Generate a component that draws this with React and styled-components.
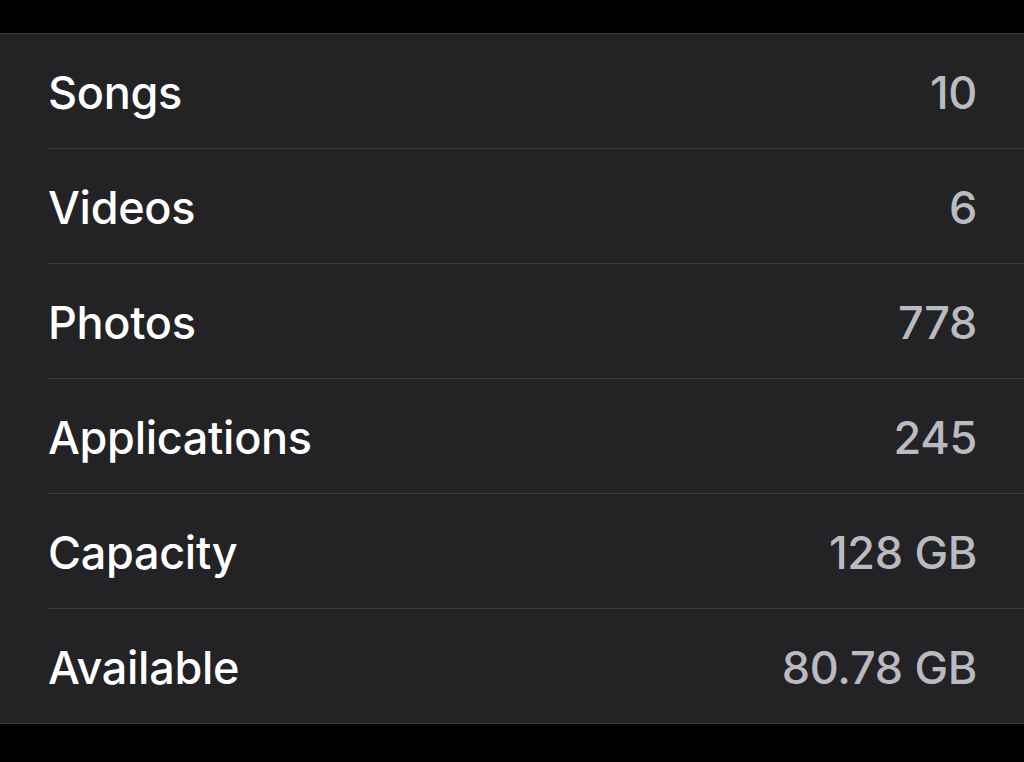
import React from 'react'
import styled, { createGlobalStyle } from 'styled-components'

const rows = [
    { label: 'Songs', value: '10' },
    { label: 'Videos', value: '6' },
    { label: 'Photos', value: '778' },
    { label: 'Applications', value: '245' },
    { label: 'Capacity', value: '128 GB' },
    { label: 'Available', value: '80.78 GB' },
]

const App = () => {
    return <>
        <GlobalStyle />
        <Screen>
            <Panel>
                {rows.map((r, i) => (
                    <Row key={r.label} last={i === rows.length - 1}>
                        <Label>{r.label}</Label>
                        <Value>{r.value}</Value>
                    </Row>
                ))}
            </Panel>
        </Screen>
    </>
}

const GlobalStyle = createGlobalStyle`
    html, body {
        margin: 0;
        padding: 0;
        background: #000;
    }
    body {
        font-family: Inter, "Liberation Sans", sans-serif;
        -webkit-font-smoothing: antialiased;
    }
`

const Screen = styled.div`
    width: 1024px;
    height: 762px;
    background: #000;
    padding-top: 33px;
    box-sizing: border-box;
    overflow: hidden;
`

const Panel = styled.div`
    background: #232325;
    border-top: 1px solid #3a3a3c;
    border-bottom: 1px solid #3a3a3c;
    padding-left: 48px;
`

const Row = styled.div`
    height: 112px;
    display: flex;
    align-items: center;
    justify-content: space-between;
    padding: 2px 47px 0 0;
    border-bottom: ${props => props.last ? 'none' : '1px solid #3b3b3e'};
`

const Label = styled.span`
    color: #ffffff;
    font-size: 45px;
    font-weight: 500;
    letter-spacing: -0.3px;
`

const Value = styled.span`
    color: #babac1;
    font-size: 45px;
    font-weight: 500;
    letter-spacing: -0.3px;
`

export default App
